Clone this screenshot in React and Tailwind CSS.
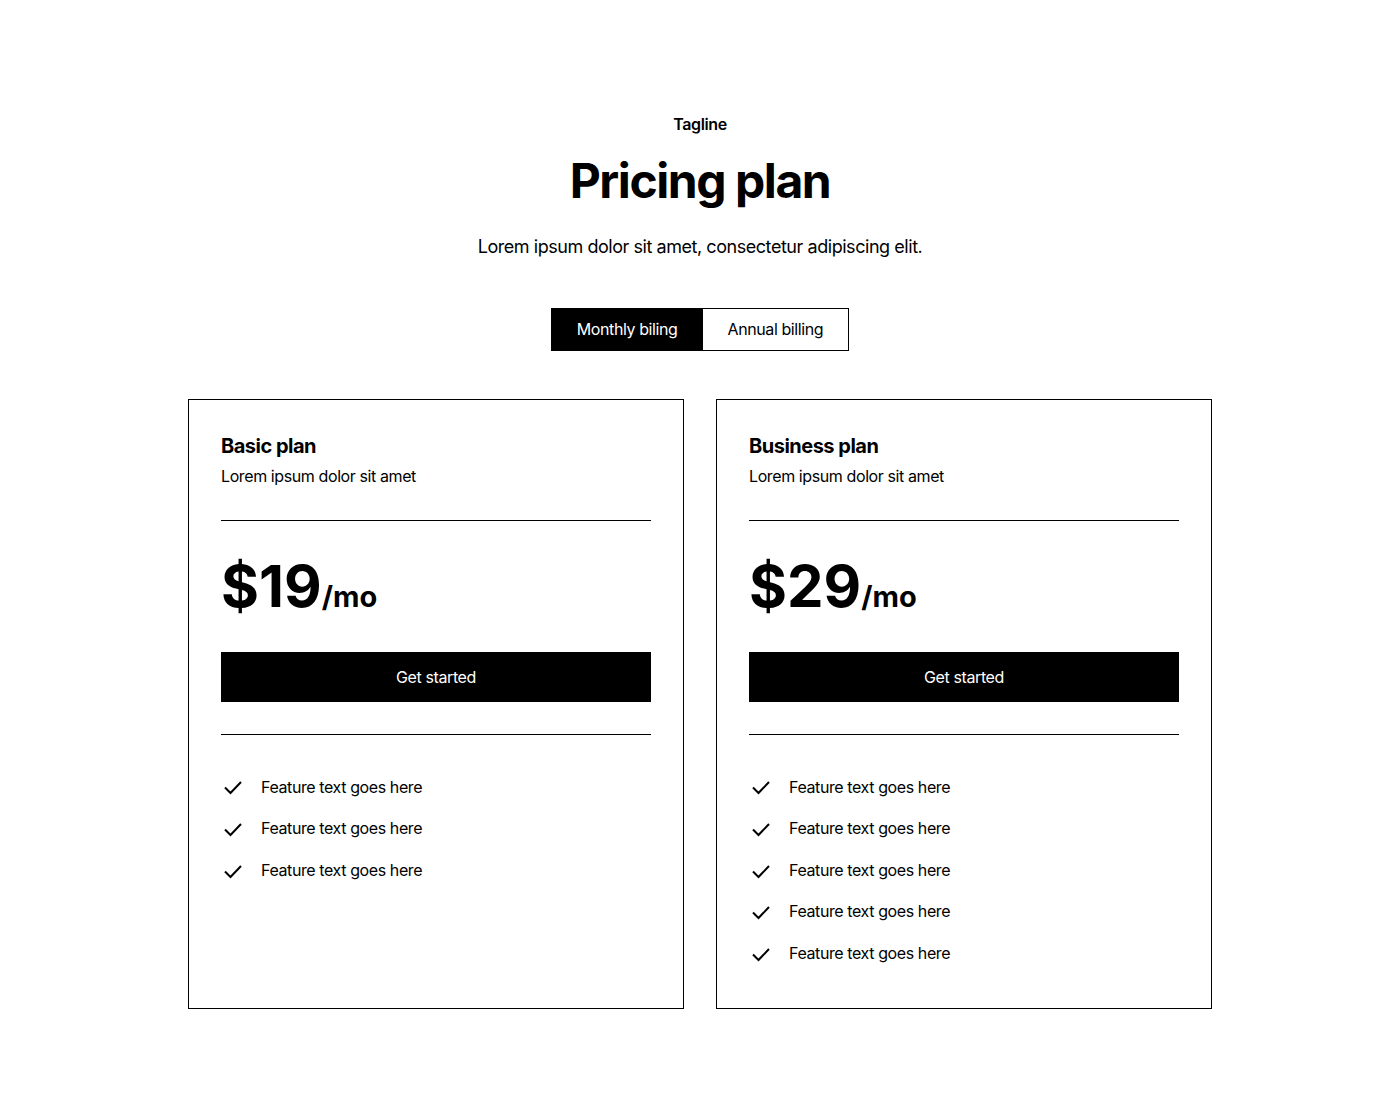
import React from "react";

function Check() {
  return (
    <svg width="24" height="24" viewBox="0 0 24 24" fill="none" className="shrink-0">
      <path d="M4 12.5l5.5 5.5L20 7" stroke="black" strokeWidth="2" strokeLinecap="butt" strokeLinejoin="miter" />
    </svg>
  );
}

function Card({ title, price, features }) {
  return (
    <div className="border border-black px-8 pt-8 pb-[33px] flex flex-col">
      <h3 className="text-[20px] leading-[28px] font-bold tracking-tight">{title}</h3>
      <p className="mt-1 text-[16px] leading-[24px] tracking-tight">Lorem ipsum dolor sit amet</p>
      <div className="mt-8 border-t border-black" />
      <div className="mt-8 flex items-end">
        <span className="text-[58px] leading-[67px] font-bold">{price}</span>
        <span className="text-[29px] leading-[1.2] font-bold mb-[5px]">/mo</span>
      </div>
      <button className="mt-8 h-[50px] bg-black text-white text-[16px] tracking-tight">Get started</button>
      <div className="mt-8 border-t border-black" />
      <ul className="mt-8 flex flex-col">
        {Array.from({ length: features }).map((_, i) => (
          <li key={i} className="flex items-center gap-4 py-2 text-[16px] leading-[1.6] tracking-tight">
            <Check />
            <span>Feature text goes here</span>
          </li>
        ))}
      </ul>
    </div>
  );
}

export default function App() {
  return (
    <div className="min-h-[1120px] bg-white text-black" style={{ fontFamily: "Inter, 'Noto Sans', sans-serif" }}>
      <div className="pt-28 flex flex-col items-center">
        <p className="text-[16px] leading-[24px] font-semibold tracking-tight">Tagline</p>
        <h1 className="mt-4 text-[48px] leading-[1.2] font-bold tracking-[-0.03em]">Pricing plan</h1>
        <p className="mt-6 text-[18px] leading-[26px] tracking-tight">Lorem ipsum dolor sit amet, consectetur adipiscing elit.</p>
        <div className="mt-12 flex border border-black">
          <button className="h-[41px] px-[25px] bg-black text-white text-[16px] tracking-tight">Monthly biling</button>
          <button className="h-[41px] px-[25px] bg-white text-black text-[16px] tracking-tight">Annual billing</button>
        </div>
        <div className="mt-12 w-[1024px] grid grid-cols-2 gap-8 items-stretch">
          <Card title="Basic plan" price="$19" features={3} />
          <Card title="Business plan" price="$29" features={5} />
        </div>
      </div>
    </div>
  );
}
